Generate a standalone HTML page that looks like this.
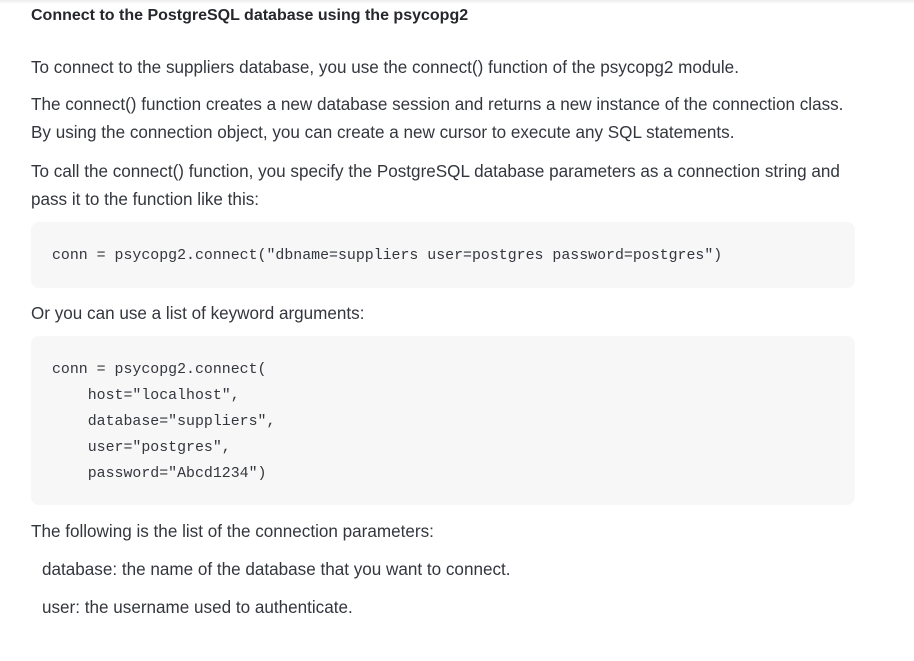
<!DOCTYPE html>
<html><head><meta charset="utf-8"><style>
html,body{margin:0;padding:0;background:#fff;width:914px;height:661px;overflow:hidden}
body{font-family:"Liberation Sans",sans-serif;color:#33363d;position:relative}
.bar{position:absolute;left:0;top:0;width:914px;height:4px;background:linear-gradient(#ececee,#fff)}
.t{position:absolute;left:31px;font-size:17.1px;line-height:28px;white-space:nowrap}
h2{position:absolute;left:31px;top:4px;margin:0;font-size:16px;line-height:24px;font-weight:bold;color:#25272c}
.box{position:absolute;left:31px;width:824px;background:#f7f7f7;border-radius:8px}
.c{position:absolute;left:52px;font-family:"Liberation Mono",monospace;font-size:14.9px;line-height:26px;white-space:pre;color:#33363d}
</style></head><body>
<div class="bar"></div>
<h2>Connect to the PostgreSQL database using the psycopg2</h2>
<div class="t" style="top:54px">To connect to the suppliers database, you use the connect() function of the psycopg2 module.</div>
<div class="t" style="top:91px">The connect() function creates a new database session and returns a new instance of the connection class.</div>
<div class="t" style="top:119px">By using the connection object, you can create a new cursor to execute any SQL statements.</div>
<div class="t" style="top:158px">To call the connect() function, you specify the PostgreSQL database parameters as a connection string and</div>
<div class="t" style="top:186px">pass it to the function like this:</div>
<div class="box" style="top:222px;height:66px"></div>
<div class="c" style="top:243px">conn = psycopg2.connect("dbname=suppliers user=postgres password=postgres")</div>
<div class="t" style="top:300px">Or you can use a list of keyword arguments:</div>
<div class="box" style="top:336px;height:169px"></div>
<div class="c" style="top:357px">conn = psycopg2.connect(
    host="localhost",
    database="suppliers",
    user="postgres",
    password="Abcd1234")</div>
<div class="t" style="top:518px">The following is the list of the connection parameters:</div>
<div class="t" style="top:556px;left:42px">database: the name of the database that you want to connect.</div>
<div class="t" style="top:594px;left:42px">user: the username used to authenticate.</div>
</body></html>
